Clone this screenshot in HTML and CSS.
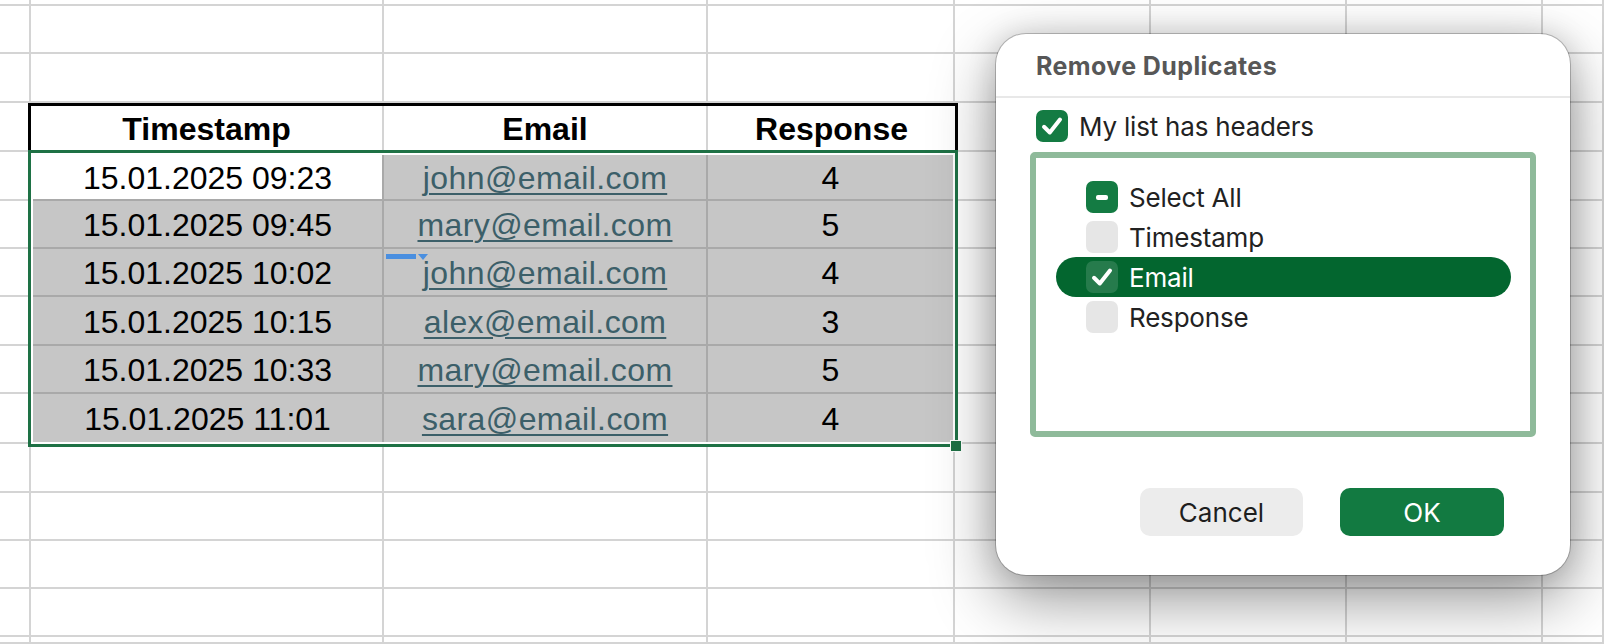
FILE: index.html
```html
<!DOCTYPE html>
<html lang="en">
<head>
<meta charset="utf-8">
<title>Remove Duplicates</title>
<link rel="stylesheet" href="styles.css">
</head>
<body>
<div class="sheet">
  <div class="g"></div><div class="g"></div><div class="g"></div><div class="g"></div><div class="g"></div><div class="g"></div><div class="g"></div><div class="g"></div>
  <div class="g"></div><div class="g"></div><div class="g"></div><div class="g"></div><div class="g"></div><div class="g"></div><div class="g"></div><div class="g"></div>
  <div class="g"></div><div class="g"></div><div class="g"></div><div class="g"></div><div class="g"></div><div class="g"></div><div class="g"></div><div class="g"></div>
  <div class="g"></div><div class="g"></div><div class="g"></div><div class="g"></div><div class="g"></div>
  <div class="g"></div><div class="g"></div><div class="g"></div><div class="g"></div><div class="g"></div>
  <div class="g"></div><div class="g"></div><div class="g"></div><div class="g"></div><div class="g"></div>
  <div class="g"></div><div class="g"></div><div class="g"></div><div class="g"></div><div class="g"></div>
  <div class="g"></div><div class="g"></div><div class="g"></div><div class="g"></div><div class="g"></div>
  <div class="g"></div><div class="g"></div><div class="g"></div><div class="g"></div><div class="g"></div>
  <div class="g"></div><div class="g"></div><div class="g"></div><div class="g"></div><div class="g"></div>
  <div class="g"></div><div class="g"></div><div class="g"></div><div class="g"></div><div class="g"></div><div class="g"></div><div class="g"></div><div class="g"></div>
  <div class="g"></div><div class="g"></div><div class="g"></div><div class="g"></div><div class="g"></div><div class="g"></div><div class="g"></div><div class="g"></div>
  <div class="g"></div><div class="g"></div><div class="g"></div><div class="g"></div><div class="g"></div><div class="g"></div><div class="g"></div><div class="g"></div>
  <div class="g"></div><div class="g"></div><div class="g"></div><div class="g"></div><div class="g"></div><div class="g"></div><div class="g"></div><div class="g"></div>
  <div class="g"></div><div class="g"></div><div class="g"></div><div class="g"></div><div class="g"></div><div class="g"></div><div class="g"></div><div class="g"></div>
  <div class="g"></div><div class="g"></div><div class="g"></div><div class="g"></div><div class="g"></div><div class="g"></div><div class="g"></div><div class="g"></div>

  <div class="table">
    <div class="thead">
      <div class="th col-a">Timestamp</div>
      <div class="th col-b">Email</div>
      <div class="th col-c">Response</div>
    </div>
    <div class="tbody">
      <div class="td active">15.01.2025 09:23</div>
      <div class="td"><span class="link">john@email.com</span></div>
      <div class="td last-col">4</div>

      <div class="td">15.01.2025 09:45</div>
      <div class="td"><span class="link">mary@email.com</span></div>
      <div class="td last-col">5</div>

      <div class="td">15.01.2025 10:02</div>
      <div class="td marked"><span class="marker"><span class="marker-bar"></span><span class="marker-tip"></span></span><span class="link">john@email.com</span></div>
      <div class="td last-col">4</div>

      <div class="td">15.01.2025 10:15</div>
      <div class="td"><span class="link">alex@email.com</span></div>
      <div class="td last-col">3</div>

      <div class="td">15.01.2025 10:33</div>
      <div class="td"><span class="link">mary@email.com</span></div>
      <div class="td last-col">5</div>

      <div class="td last-row">15.01.2025 11:01</div>
      <div class="td last-row"><span class="link">sara@email.com</span></div>
      <div class="td last-row last-col">4</div>

      <span class="fill-handle"></span>
    </div>
  </div>
</div>

<div class="dialog">
  <div class="dlg-head">Remove Duplicates</div>
  <div class="dlg-body">
    <label class="hdr-check">
      <span class="box on"><svg viewBox="0 0 32 32" width="32" height="32"><path d="M8 16.8 L13.8 22.5 L24 9.6" fill="none" stroke="#fff" stroke-width="4" stroke-linecap="round" stroke-linejoin="round"/></svg></span>
      <span class="lbl">My list has headers</span>
    </label>
    <div class="list">
      <div class="item">
        <span class="box on"><span class="dash"></span></span>
        <span class="lbl">Select All</span>
      </div>
      <div class="item">
        <span class="box off"></span>
        <span class="lbl">Timestamp</span>
      </div>
      <div class="item selected">
        <span class="box sel"><svg viewBox="0 0 32 32" width="32" height="32"><path d="M8 16.8 L13.8 22.5 L24 9.6" fill="none" stroke="#fff" stroke-width="4" stroke-linecap="round" stroke-linejoin="round"/></svg></span>
        <span class="lbl">Email</span>
      </div>
      <div class="item">
        <span class="box off"></span>
        <span class="lbl">Response</span>
      </div>
    </div>
    <div class="buttons">
      <button class="btn cancel">Cancel</button>
      <button class="btn ok">OK</button>
    </div>
  </div>
</div>
</body>
</html>
```

FILE: styles.css
```css
html, body {
  margin: 0;
  padding: 0;
  background: #ffffff;
}

body {
  position: relative;
  width: 1604px;
  height: 644px;
  overflow: hidden;
  font-family: "Liberation Sans", Arial, sans-serif;
}

.sheet {
  display: grid;
  grid-template-columns: 31px 353px 324px 247px 196px 196px 196px 61px;
  grid-template-rows: 6px 48px 49px 49px 49px 48px 48px 49px 48px 50px 49px 48px 48px 48px 7px;
  width: 1604px;
  height: 644px;
}

.g {
  border-right: 2px solid #d4d4d4;
  border-bottom: 2px solid #d4d4d4;
}

.table {
  grid-column: 2 / 5;
  grid-row: 4 / 11;
  margin: 0 -3px -3px -3px;
  display: flex;
  flex-direction: column;
  position: relative;
  z-index: 1;
}

.thead {
  display: flex;
  height: 47px;
  box-sizing: border-box;
  border: 3px solid #000;
  border-bottom: 0;
  background: #fff;
}

.th {
  display: flex;
  align-items: center;
  justify-content: center;
  padding-top: 3px;
  box-sizing: border-box;
  font-size: 32px;
  font-weight: 700;
  color: #000;
  border-right: 2px solid #d4d4d4;
}

.th.col-a { width: 353px; }
.th.col-b { width: 324px; }
.th.col-c { width: 247px; border-right: 0; }

.tbody {
  flex: 1;
  position: relative;
  display: grid;
  grid-template-columns: 351px 324px 245px;
  grid-template-rows: 46px 48px 48px 49px 48px 48px;
  border: 3px solid #1e7145;
  padding: 2px;
  background: #fff;
}

.td {
  position: relative;
  display: flex;
  align-items: center;
  justify-content: center;
  padding-top: 3px;
  box-sizing: border-box;
  background: #c6c6c6;
  border-right: 2px solid #a9a9a9;
  border-bottom: 2px solid #a9a9a9;
  font-size: 32px;
  color: #000;
  white-space: nowrap;
}

.td.active { background: #fff; }
.td.last-col { border-right: 0; }
.td.last-row { border-bottom: 0; }

.link {
  color: #3c5f69;
  text-decoration: underline;
  text-decoration-thickness: 2px;
  text-underline-offset: 4px;
  letter-spacing: 0.4px;
}

.marker {
  position: absolute;
  left: 2px;
  top: 5px;
  display: flex;
  align-items: flex-start;
  gap: 2px;
}

.marker-bar {
  display: block;
  width: 30px;
  height: 5px;
  background: #4a8fe0;
}

.marker-tip {
  display: block;
  width: 0;
  height: 0;
  border-left: 5px solid transparent;
  border-right: 5px solid transparent;
  border-top: 6px solid #4a8fe0;
}

.fill-handle {
  position: absolute;
  right: -7px;
  bottom: -8px;
  width: 10px;
  height: 10px;
  background: #1e7145;
  border: 1px solid #fff;
}

/* Dialog */
.dialog {
  position: absolute;
  left: 996px;
  top: 34px;
  width: 574px;
  box-sizing: border-box;
  background: #fff;
  border-radius: 30px;
  box-shadow: 0 0 0 1px rgba(0, 0, 0, 0.22), 0 24px 64px rgba(0, 0, 0, 0.42), 0 0 30px rgba(0, 0, 0, 0.14);
  font-family: "Inter", "Noto Sans", sans-serif;
  color: #222;
  z-index: 5;
}

.dlg-head {
  padding: 18px 40px 15px;
  font-size: 25px;
  line-height: 29px;
  font-weight: 700;
  letter-spacing: 0.4px;
  color: #575757;
  border-bottom: 2px solid #e8e8e8;
}

.dlg-body {
  display: flex;
  flex-direction: column;
  padding: 0 34px 39px;
}

.hdr-check {
  display: flex;
  align-items: center;
  gap: 11px;
  height: 32px;
  margin: 12px 0 0 6px;
}

.lbl {
  font-size: 26px;
  color: #222;
  white-space: nowrap;
  letter-spacing: -0.2px;
}

.box {
  display: flex;
  align-items: center;
  justify-content: center;
  flex: none;
  width: 32px;
  height: 32px;
  border-radius: 7px;
  box-sizing: border-box;
}

.box.on { background: #147b43; }
.box.off { background: #e6e6e6; }
.box.sel { background: rgba(255, 255, 255, 0.14); }

.dash {
  display: block;
  width: 12px;
  height: 5px;
  border-radius: 2px;
  background: #fff;
}

.list {
  margin-top: 10px;
  height: 285px;
  box-sizing: border-box;
  border: 6px solid #8fba9a;
  border-radius: 5px;
  padding: 19px 19px 0 20px;
  display: flex;
  flex-direction: column;
}

.item {
  display: flex;
  align-items: center;
  gap: 11px;
  height: 40px;
  padding-left: 30px;
  border-radius: 20px;
}

.item.selected {
  background: #03662f;
}

.item.selected .lbl { color: #fff; }

.buttons {
  display: flex;
  justify-content: flex-end;
  gap: 37px;
  margin-top: 51px;
  padding-right: 32px;
}

.btn {
  width: 163px;
  height: 48px;
  border: 0;
  border-radius: 10px;
  font-family: "Inter", "Noto Sans", sans-serif;
  font-size: 26px;
  padding: 0;
}

.btn.cancel {
  background: #ececec;
  color: #1e1e1e;
}

.btn.ok {
  width: 164px;
  background: #127a41;
  color: #fff;
}
```
